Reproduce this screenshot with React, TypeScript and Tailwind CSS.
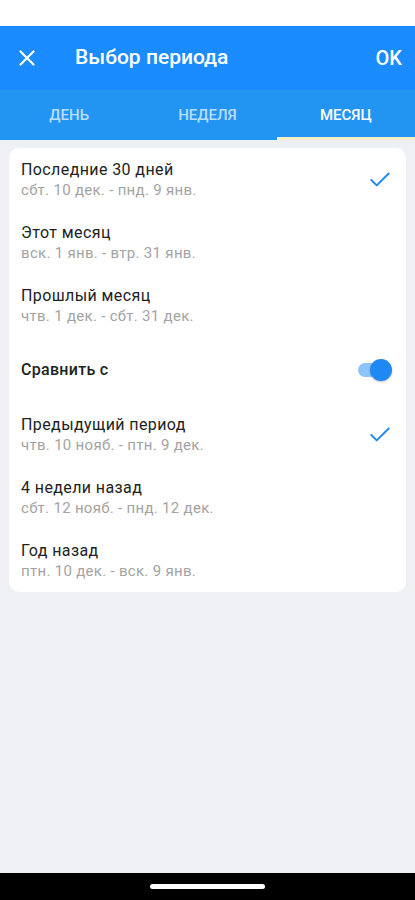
import { Check, X } from "lucide-react"

const periods = [
  { title: "Последние 30 дней", range: "сбт. 10 дек. - пнд. 9 янв.", checked: true },
  { title: "Этот месяц", range: "вск. 1 янв. - втр. 31 янв.", checked: false },
  { title: "Прошлый месяц", range: "чтв. 1 дек. - сбт. 31 дек.", checked: false },
]

const compares = [
  { title: "Предыдущий период", range: "чтв. 10 нояб. - птн. 9 дек.", checked: true },
  { title: "4 недели назад", range: "сбт. 12 нояб. - пнд. 12 дек.", checked: false },
  { title: "Год назад", range: "птн. 10 дек. - вск. 9 янв.", checked: false },
]

const tabs = ["День", "Неделя", "Месяц"]

function Row({ title, range, checked }: { title: string; range: string; checked: boolean }) {
  return (
    <div className="flex items-center justify-between pl-[12px] pr-[13px] pt-[12px] pb-[11px]">
      <div className="flex flex-col">
        <span className="text-[16px] leading-[20px] tracking-[0.4px] text-[#222]">{title}</span>
        <span className="text-[15px] leading-[20px] tracking-[0.3px] text-[#a3a3a3]">{range}</span>
      </div>
      {checked && <Check className="h-[26px] w-[26px] text-[#1e88f5]" strokeWidth={1.8} />}
    </div>
  )
}

export default function App() {
  return (
    <div className="flex h-[900px] w-[415px] flex-col bg-[#eff0f3]" style={{ fontFamily: "Roboto, 'Noto Sans', sans-serif" }}>
      {/* status bar */}
      <div className="h-[26px] bg-white" />

      {/* header */}
      <div className="flex h-[64px] items-center bg-[#1a8cff] pl-[14px] pr-[13px] text-white">
        <X className="h-[26px] w-[26px]" strokeWidth={2} />
        <span className="ml-[35px] flex-1 text-[21px] font-medium">Выбор периода</span>
        <span className="text-[20px] font-medium">OK</span>
      </div>

      {/* tabs */}
      <div className="grid h-[50px] grid-cols-3 bg-[#2294f2]">
        {tabs.map((t, i) => (
          <div
            key={t}
            className={`flex items-center justify-center border-b-[3px] pt-[3px] text-[15px] font-medium uppercase ${
              i === 2 ? "border-[#f4efc6] text-white" : "border-transparent text-white/70"
            }`}
          >
            {t}
          </div>
        ))}
      </div>

      {/* card */}
      <div className="mx-[9px] mt-[8px] rounded-[10px] bg-white">
        {periods.map((p) => (
          <Row key={p.title} {...p} />
        ))}
        <div className="flex h-[66px] items-center justify-between pl-[12px] pr-[14px]">
          <span className="text-[16px] font-medium tracking-[0.3px] text-[#222]">Сравнить с</span>
          <div className="relative flex h-[22px] w-[36px] items-center">
            <div className="ml-[2px] h-[14px] w-[30px] rounded-full bg-[#8cc4fb]" />
            <div className="absolute right-0 h-[22px] w-[22px] rounded-full bg-[#1e88f5] shadow-[0_1px_2px_rgba(0,0,0,0.25)]" />
          </div>
        </div>
        {compares.map((p) => (
          <Row key={p.title} {...p} />
        ))}
      </div>

      <div className="flex-1" />

      {/* nav bar */}
      <div className="flex h-[27px] items-center justify-center bg-black">
        <div className="h-[5px] w-[115px] rounded-full bg-white" />
      </div>
    </div>
  )
}
